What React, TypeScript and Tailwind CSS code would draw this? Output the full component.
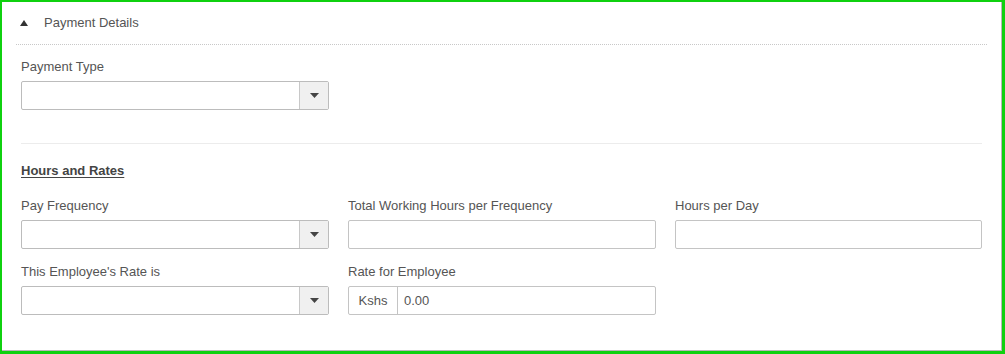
import type { ReactNode } from "react";

function Label({ children }: { children: ReactNode }) {
  return <div className="mb-[5px] h-[18px] text-[13px] leading-[18px] text-[#555]">{children}</div>;
}

function Select() {
  return (
    <div className="flex h-[29px] rounded-[2px] border border-[#bcbcbc] bg-white">
      <div className="flex-1" />
      <div className="flex w-[29px] items-center justify-center border-l border-[#c8c8c8] bg-[#f0f0f0]">
        <svg width="9" height="5" viewBox="0 0 9 5">
          <path d="M0 0h9L4.5 5z" fill="#444" />
        </svg>
      </div>
    </div>
  );
}

function Input({ value }: { value?: string }) {
  return (
    <div className="flex h-[29px] items-center rounded-[2px] border border-[#c4c4c4] bg-white px-[6px] text-[13px] text-[#555]">
      {value}
    </div>
  );
}

export default function App() {
  return (
    <div
      className="h-[354px] w-[1005px] border-t-2 border-r-[3px] border-b-[3px] border-l-2 border-[#0fd10f] bg-white"
      style={{ fontFamily: '"Liberation Sans", Arial, sans-serif' }}
    >
      <div className="h-full border-r border-b border-[#b8b8b8]">
        <div className="mx-[14px] flex h-[43px] items-center border-b border-dotted border-[#c8c8c8] pl-[4px]">
          <svg width="8" height="6" viewBox="0 0 8 6" className="mb-[1px]">
            <path d="M4 0L8 6H0z" fill="#333" />
          </svg>
          <span className="ml-[16px] text-[13px] text-[#555]">Payment Details</span>
        </div>

        <div className="px-[19px]">
          <div className="mt-[13px] w-[308px]">
            <Label>Payment Type</Label>
            <Select />
          </div>

          <div className="mt-[33px] border-t border-[#ececec]" />

          <div className="mt-[18px] h-[18px] text-[13px] leading-[18px] font-bold text-[#444] underline underline-offset-2">
            Hours and Rates
          </div>

          <div className="mt-[17px] grid grid-cols-[308px_308px_1fr] gap-x-[19px] gap-y-[14px]">
            <div>
              <Label>Pay Frequency</Label>
              <Select />
            </div>
            <div>
              <Label>Total Working Hours per Frequency</Label>
              <Input />
            </div>
            <div>
              <Label>Hours per Day</Label>
              <Input />
            </div>
            <div>
              <Label>This Employee's Rate is</Label>
              <Select />
            </div>
            <div>
              <Label>Rate for Employee</Label>
              <div className="flex h-[29px] rounded-[2px] border border-[#c4c4c4] bg-white text-[13px] text-[#555]">
                <div className="flex w-[49px] items-center justify-center border-r border-[#c4c4c4]">Kshs</div>
                <div className="flex flex-1 items-center pl-[6px]">0.00</div>
              </div>
            </div>
            <div />
          </div>
        </div>
      </div>
    </div>
  );
}
